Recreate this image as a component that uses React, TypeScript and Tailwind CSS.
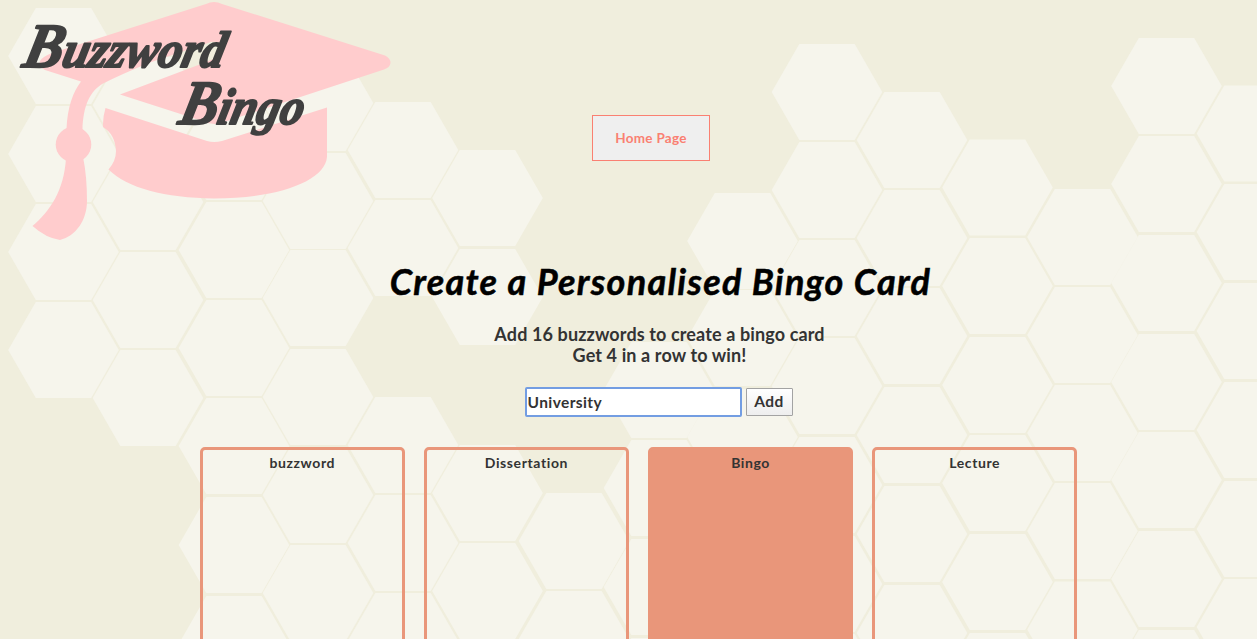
const columns: { cx: number; tops: number[] }[] = [
  { cx: 63.5, tops: [8, 106, 204, 302] },
  { cx: 148, tops: [57, 154, 252, 350] },
  { cx: 234, tops: [104, 202, 300, 398, 497, 596] },
  { cx: 318, tops: [55, 153, 250, 349, 447, 545] },
  { cx: 403, tops: [102, 200, 397, 495, 593] },
  { cx: 487.5, tops: [150, 249, 445, 543] },
  { cx: 574, tops: [493, 591] },
  { cx: 659, tops: [342, 440, 539, 638] },
  { cx: 742.5, tops: [193, 290, 389, 487, 586] },
  { cx: 827, tops: [44, 142, 240, 338, 437, 536, 634] },
  { cx: 912, tops: [92, 190, 288, 387, 486, 585] },
  { cx: 997.5, tops: [139.5, 238, 337, 435, 534, 633] },
  { cx: 1082.5, tops: [189, 287, 385, 483, 581.5] },
  { cx: 1166.5, tops: [38, 136, 235, 334, 432, 531, 630] },
  { cx: 1252, tops: [85.5, 184, 283, 382, 481, 579] },
];

const cards = [
  { word: 'buzzword', marked: false },
  { word: 'Dissertation', marked: false },
  { word: 'Bingo', marked: true },
  { word: 'Lecture', marked: false },
];

function Honeycomb() {
  return (
    <svg className="absolute inset-0" width="1257" height="639" fill="#f6f5ec" aria-hidden="true">
      {columns.map(({ cx, tops }) =>
        tops.map((top) => (
          <polygon
            key={`${cx}-${top}`}
            points={`${cx - 55.3},${top + 48} ${cx - 27.7},${top} ${cx + 27.7},${top} ${cx + 55.3},${top + 48} ${cx + 27.7},${top + 96} ${cx - 27.7},${top + 96}`}
          />
        )),
      )}
    </svg>
  );
}

function Logo() {
  return (
    <svg className="block h-[245px] w-[400px]" viewBox="0 0 400 245">
      <g fill="#ffcccd">
        <path d="M40 61 Q42 57 52 53 L206 4 Q214 0 222 4 L385 55.500 Q390.500 58 390.500 63 Q390 67.500 384 69.500 L224 122 Q214 126 204 121.500 L120 94.500 L197 65.500 L216 58 Q224 52 221 45 L218 42.500 Q213 41 208 43 L150 62.500 Q122 74 103 83.500 C90 91 83 106 82.500 130 L66.500 129 C67.500 107 73 92 81 81.500 L45 70 Q38 66 40 61Z" />
        <path d="M105.500 108 L207 141 Q214 143 222 141 L327 107.500 V157 C325 181 278 198.500 214 198.500 C165 198 127 188 108.500 169.500 Q116 161 116 151 Q115 134 103 127 Q102.500 118 105.500 108Z" />
        <circle cx="73.500" cy="144.500" r="17.800" />
        <path d="M66 158 C64 191 50 211 32.500 226 Q46 238 60 240 C76 236 87 220 87 201 Q87 176 83 157Z" />
      </g>
      <g
        fill="#404040"
        stroke="#404040"
        strokeWidth="2"
        strokeLinejoin="round"
        className="font-['Brush_Script_MT','Liberation_Serif',cursive] text-[51px] font-bold italic"
      >
        <text transform="translate(21 67) skewX(-13)" textLength="201" lengthAdjust="spacingAndGlyphs">
          <tspan className="text-[63px]">B</tspan>uzzword
        </text>
        <text transform="translate(177 124) skewX(-13)" textLength="124" lengthAdjust="spacingAndGlyphs">
          <tspan className="text-[63px]">B</tspan>ingo
        </text>
      </g>
    </svg>
  );
}

export default function App() {
  return (
    <div className="relative h-[639px] w-[1257px] overflow-hidden bg-[#f0eedd] font-[Lato,sans-serif] font-bold text-[#333]">
      <Honeycomb />
      <div className="relative flex h-full flex-col">
        <header className="flex h-[245px] items-start">
          <Logo />
          <button className="mt-[115px] ml-48 h-[46px] w-[118px] border border-[#fa8072] bg-[#efefef] pt-px text-[13.500px] tracking-[0.300px] text-[#fa8072]">
            Home Page
          </button>
        </header>
        <main className="flex flex-col">
          <section className="flex flex-col items-center pl-[62px]">
            <h1 className="mt-3.5 h-11 pl-0.5 text-[36px] leading-11 tracking-[1.250px] whitespace-nowrap text-black italic [-webkit-text-stroke:0.5px_#000]">
              Create a Personalised Bingo Card
            </h1>
            <p className="mt-[21px] text-center text-[18px] leading-[21px] tracking-[0.120px] whitespace-nowrap">
              Add 16 buzzwords to create a bingo card
              <br />
              Get 4 in a row to win!
            </p>
            <form className="mt-[21px] mr-0.5 flex h-[30px] items-center gap-1">
              <input
                className="h-[30px] w-[217px] rounded-[2px] border-2 border-[#739de2] bg-white px-px pb-px text-[15.500px] tracking-[0.400px] outline-none"
                defaultValue="University"
              />
              <button
                type="button"
                className="h-7 w-[47px] rounded-[1px] border border-[#a3a3a3] bg-linear-to-b from-white to-[#eeeeee] text-[15.500px] tracking-[0.400px]"
              >
                Add
              </button>
            </form>
          </section>
          <section className="mt-[30px] ml-[200px] grid w-[877px] grid-cols-4 gap-x-[19.500px]">
            {cards.map(({ word, marked }) => (
              <div
                key={word}
                className={`h-52 rounded-[5px] border-3 border-[#e9967a] pt-1 text-center text-[14px] leading-[18px] tracking-[0.600px] ${marked ? 'bg-[#e9967a]' : ''}`}
              >
                {word}
              </div>
            ))}
          </section>
        </main>
      </div>
    </div>
  );
}
